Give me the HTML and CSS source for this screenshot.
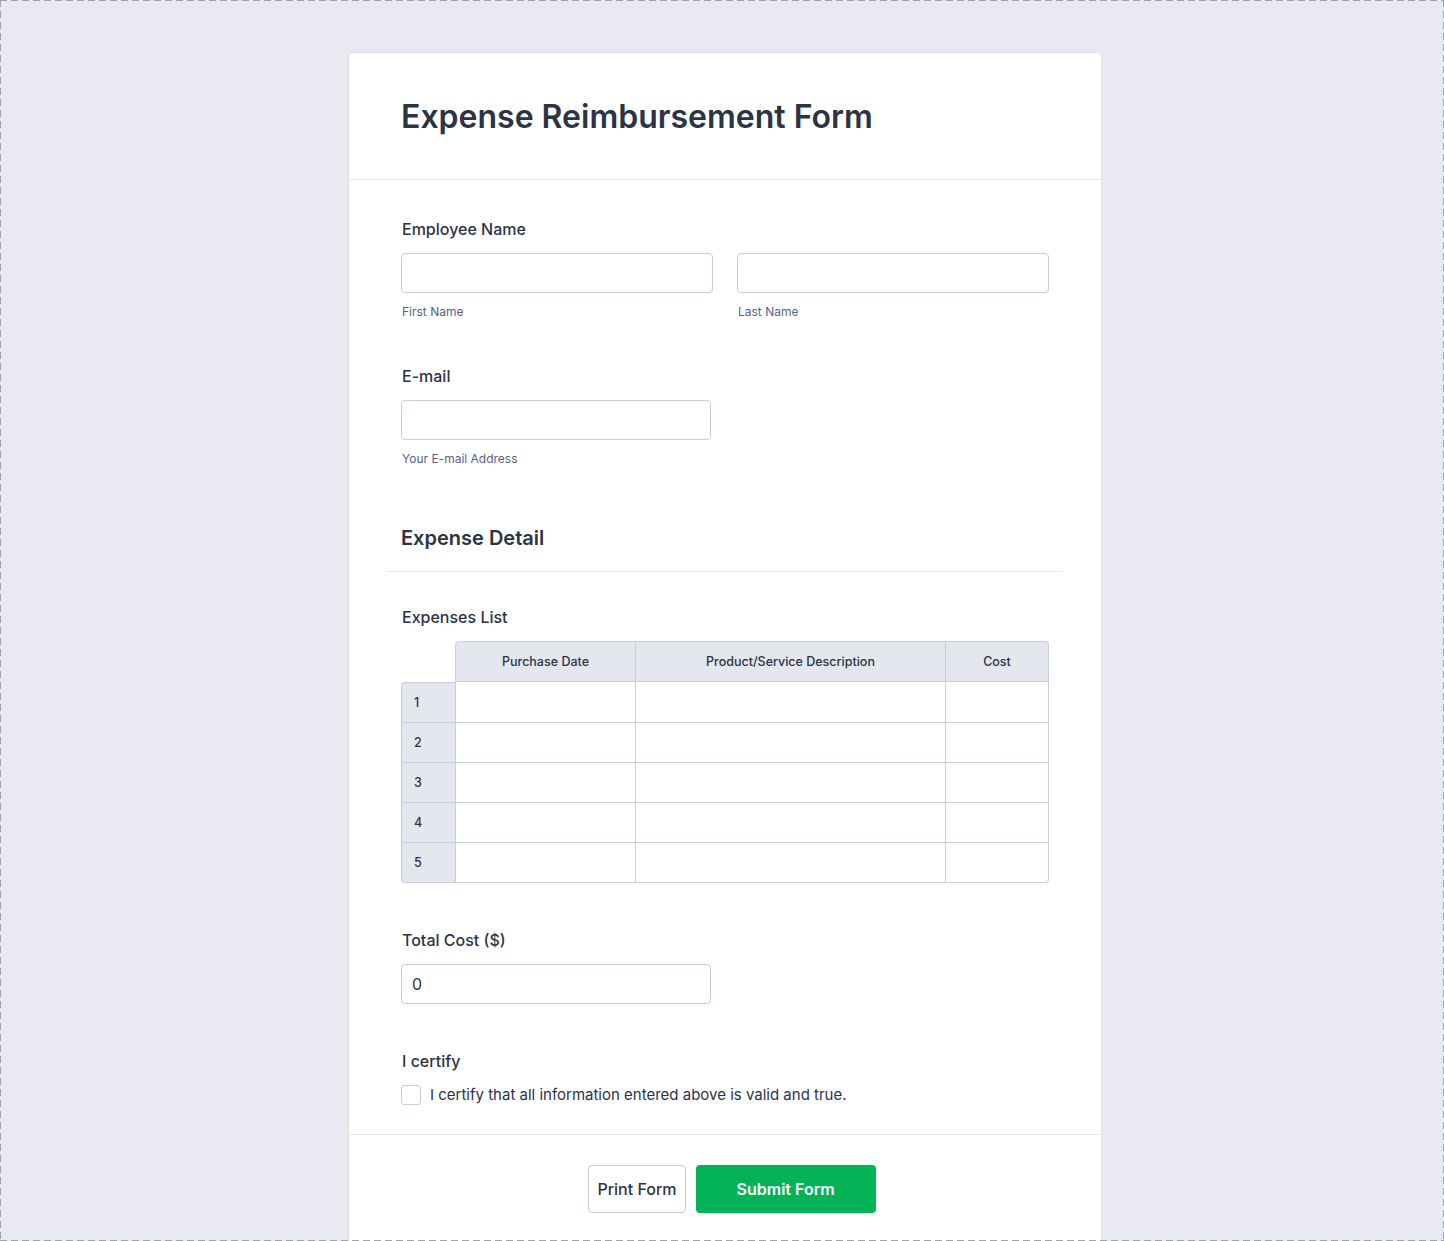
FILE: index.html
```html
<!DOCTYPE html>
<html lang="en">
<head>
<meta charset="utf-8">
<title>Expense Reimbursement Form</title>
<link rel="stylesheet" href="styles.css">
</head>
<body>
<div class="frame">
  <form class="card">
    <header class="card-header">
      <h1 class="title">Expense Reimbursement Form</h1>
    </header>
    <div class="card-body">
      <div class="field">
        <div class="label">Employee Name</div>
        <div class="name-row">
          <div class="sub">
            <input class="input" type="text">
            <div class="sublabel">First Name</div>
          </div>
          <div class="sub">
            <input class="input" type="text">
            <div class="sublabel">Last Name</div>
          </div>
        </div>
      </div>
      <div class="field">
        <div class="label">E-mail</div>
        <input class="input input-half" type="text">
        <div class="sublabel">Your E-mail Address</div>
      </div>
      <div class="section">
        <h2 class="section-title">Expense Detail</h2>
      </div>
      <div class="field field-table">
        <div class="label">Expenses List</div>
        <table class="matrix">
          <thead>
            <tr>
              <th class="corner"></th>
              <th class="col col-first">Purchase Date</th>
              <th class="col col-desc">Product/Service Description</th>
              <th class="col col-last">Cost</th>
            </tr>
          </thead>
          <tbody>
            <tr class="row-first"><td class="rowhead">1</td><td class="cell cell-first"></td><td class="cell"></td><td class="cell"></td></tr>
            <tr><td class="rowhead">2</td><td class="cell cell-first"></td><td class="cell"></td><td class="cell"></td></tr>
            <tr><td class="rowhead">3</td><td class="cell cell-first"></td><td class="cell"></td><td class="cell"></td></tr>
            <tr><td class="rowhead">4</td><td class="cell cell-first"></td><td class="cell"></td><td class="cell"></td></tr>
            <tr class="row-last"><td class="rowhead">5</td><td class="cell cell-first"></td><td class="cell"></td><td class="cell cell-end"></td></tr>
          </tbody>
        </table>
      </div>
      <div class="field field-total">
        <div class="label">Total Cost ($)</div>
        <input class="input input-half input-value" type="text" value="0">
      </div>
      <div class="field field-check">
        <div class="label">I certify</div>
        <label class="check">
          <span class="box"></span>
          <span class="check-text">I certify that all information entered above is valid and true.</span>
        </label>
      </div>
    </div>
    <footer class="card-footer">
      <button type="button" class="btn btn-print">Print Form</button>
      <button type="button" class="btn btn-submit">Submit Form</button>
    </footer>
  </form>
</div>
</body>
</html>
```
FILE: styles.css
```css
* { box-sizing: border-box; }
html, body {
  margin: 0;
  padding: 0;
  background: #e9eaf1;
}
body {
  font-family: Inter, "Noto Sans", "Liberation Sans", sans-serif;
  color: #2c3345;
}
.frame {
  position: relative;
  height: 1241px;
  width: 1444px;
  overflow: hidden;
  padding: 53px 0 0 6px;
  background: #e9eaf1;
}
.frame::after {
  content: "";
  position: absolute;
  inset: 0;
  pointer-events: none;
  background:
    repeating-linear-gradient(to right, #a2a4ac 0 7px, transparent 7px 11px) left top / 100% 1px no-repeat,
    repeating-linear-gradient(to right, #a2a4ac 0 7px, transparent 7px 11px) left bottom / 100% 1px no-repeat,
    repeating-linear-gradient(to bottom, #a2a4ac 0 7px, transparent 7px 11px) left top / 1px 100% no-repeat,
    repeating-linear-gradient(to bottom, #a2a4ac 0 7px, transparent 7px 11px) right top / 1px 100% no-repeat;
}
.card {
  width: 752px;
  margin: 0 auto;
  background: #fff;
  border-radius: 4px 4px 0 0;
  box-shadow: 0 0 2px rgba(87, 100, 126, 0.25);
}
.card-header {
  padding: 41px 52px 39px;
  border-bottom: 1px solid #e6e8ef;
}
.title {
  margin: 0;
  font-size: 32px;
  line-height: 46px;
  font-weight: 600;
  color: #2c3345;
}
.card-body {
  padding: 39px 52px 29px;
}
.field {
  padding-bottom: 46px;
}
.field-table, .field-total { padding-bottom: 47px; }
.field-check { padding-bottom: 0; }
.label {
  font-size: 16px;
  line-height: 20px;
  font-weight: 500;
  margin-left: 1px;
  margin-bottom: 14px;
  color: #2c3345;
}
.name-row {
  display: flex;
  gap: 24px;
}
.sub { flex: 1; }
.input {
  display: block;
  width: 100%;
  height: 40px;
  border: 1px solid #c5cbd8;
  border-radius: 4px;
  background: #fff;
  font-family: inherit;
  font-size: 16px;
  color: #2c3345;
  padding: 0 10px;
  margin: 0;
  outline: none;
}
.input-half { width: 310px; }
.sublabel {
  font-size: 12px;
  line-height: 16px;
  margin-top: 11px;
  margin-left: 1px;
  color: #57647e;
}
.section {
  margin: 11px -14px 35px;
  padding: 0 14px 19px;
  border-bottom: 1px solid #e6e8ef;
}
.section-title {
  margin: 0;
  font-size: 20px;
  line-height: 28px;
  font-weight: 600;
  color: #2c3345;
}
.matrix {
  border-collapse: separate;
  border-spacing: 0;
  width: 648px;
  table-layout: fixed;
  font-size: 12.5px;
  color: #2c3345;
}
.matrix th, .matrix td { padding: 0; }
.corner { width: 54px; }
.col {
  height: 41px;
  background: #e4e7ee;
  border-top: 1px solid #c8cedb;
  border-right: 1px solid #c8cedb;
  border-bottom: 1px solid #c8cedb;
  font-weight: 500;
  text-align: center;
  vertical-align: middle;
}
.col-first {
  width: 181px;
  border-left: 1px solid #c8cedb;
  border-top-left-radius: 4px;
}
.col-desc { width: 310px; }
.col-last { border-top-right-radius: 4px; }
.rowhead {
  height: 40px;
  background: #e4e7ee;
  border-left: 1px solid #c8cedb;
  border-bottom: 1px solid #c8cedb;
  padding-left: 12px !important;
  font-weight: 500;
  vertical-align: middle;
}
.row-first .rowhead {
  border-top: 1px solid #c8cedb;
  border-top-left-radius: 4px;
  height: 41px;
}
.row-last .rowhead { border-bottom-left-radius: 4px; }
.cell {
  border-right: 1px solid #c8cedb;
  border-bottom: 1px solid #c8cedb;
  background: #fff;
}
.cell-first { border-left: 1px solid #c8cedb; }
.cell-end { border-bottom-right-radius: 4px; }
.check {
  display: flex;
  align-items: center;
  gap: 9px;
}
.box {
  width: 20px;
  height: 20px;
  border: 1px solid #c5cbd8;
  border-radius: 3px;
  background: #fff;
  flex: none;
}
.check-text {
  font-size: 15px;
  line-height: 20px;
  color: #2c3345;
}
.card-footer {
  border-top: 1px solid #e6e8ef;
  padding: 30px 0 40px 14px;
  display: flex;
  justify-content: center;
  gap: 10px;
}
.btn {
  height: 48px;
  border-radius: 4px;
  font-family: inherit;
  font-size: 16px;
  font-weight: 500;
  cursor: pointer;
}
.btn-print {
  background: #fff;
  border: 1px solid #c5cbd8;
  color: #2c3345;
  padding: 0 8px;
}
.btn-submit {
  width: 180px;
  background: #04b356;
  border: none;
  color: #fff;
  font-weight: 600;
}
```
